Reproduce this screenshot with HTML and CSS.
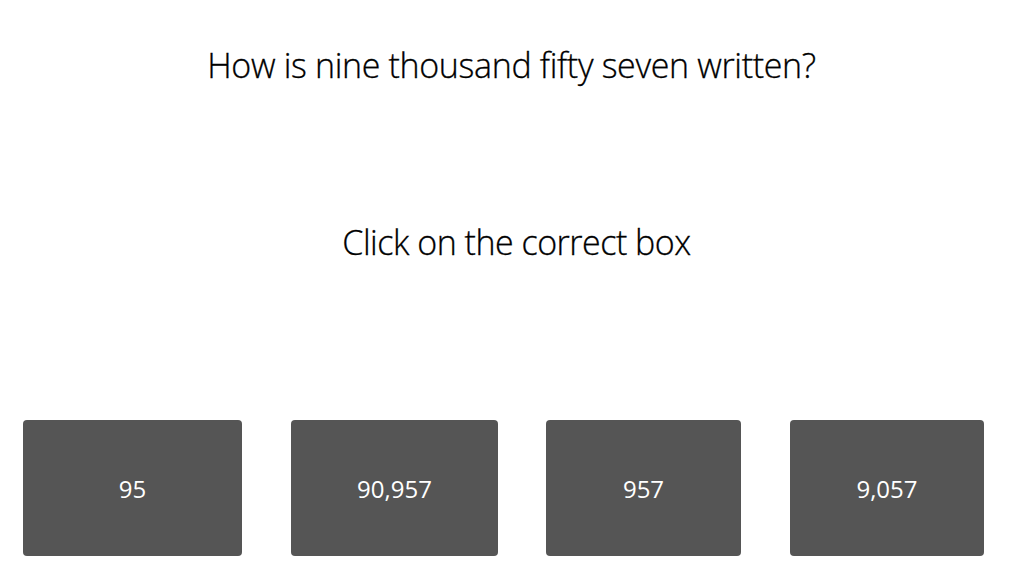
FILE: index.html
```html
<!DOCTYPE html>
<html>
<head>
<meta charset="utf-8">
<link rel="stylesheet" href="styles.css">
</head>
<body>
<main class="page">
  <h1 class="question">How is nine thousand fifty seven written?</h1>
  <p class="instruction">Click on the correct box</p>
  <div class="choices">
    <div class="box box-1">95</div>
    <div class="box box-2">90,957</div>
    <div class="box box-3">957</div>
    <div class="box box-4">9,057</div>
  </div>
</main>
</body>
</html>
```

FILE: styles.css
```css
html, body {
  margin: 0;
  padding: 0;
  background: #ffffff;
}
.page {
  width: 1013px;
  height: 583px;
  display: flex;
  flex-direction: column;
  font-family: "Open Sans", "Liberation Sans", sans-serif;
  color: #000;
}
.question {
  margin: 0;
  padding-top: 40px;
  padding-left: 10px;
  height: 50px;
  line-height: 50px;
  font-size: 34px;
  font-weight: 300;
  letter-spacing: -0.35px;
  text-align: center;
  -webkit-text-stroke: 0.3px #000;
}
.instruction {
  margin: 0;
  margin-top: 127px;
  padding-left: 20px;
  height: 50px;
  line-height: 50px;
  font-size: 34px;
  font-weight: 300;
  letter-spacing: -0.5px;
  text-align: center;
  -webkit-text-stroke: 0.3px #000;
}
.choices {
  margin-top: 153px;
  display: flex;
  padding-left: 23px;
  gap: 48px;
}
.box {
  height: 136px;
  background: #555555;
  border-radius: 4px;
  color: #ffffff;
  font-size: 24px;
  display: flex;
  align-items: center;
  justify-content: center;
}
.box-1 { width: 219px; }
.box-2 { width: 207px; margin-left: 1px; }
.box-3 { width: 195px; }
.box-4 { width: 194px; margin-left: 1px; }
```
